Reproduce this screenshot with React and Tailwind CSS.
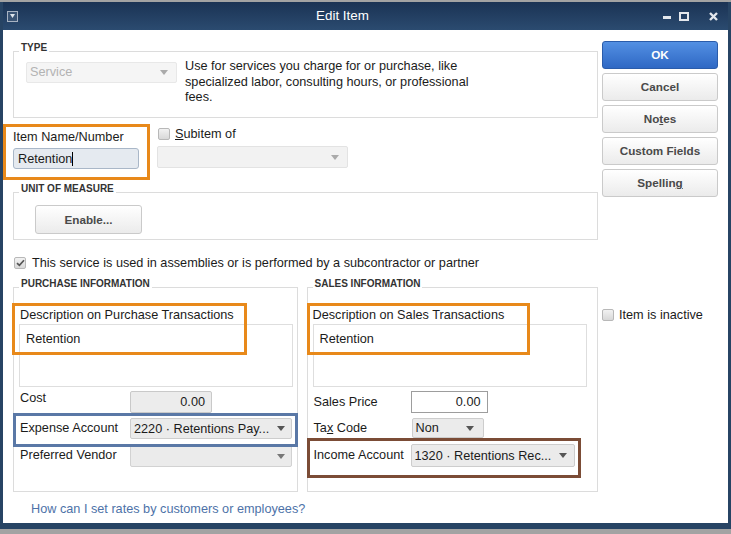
import React from "react";

const Arrow = ({ color = "#555" }) => (
  <svg width="8" height="5" viewBox="0 0 8 5" className="shrink-0">
    <path d="M0 0H8L4 5Z" fill={color} />
  </svg>
);

const Box = ({ checked }) => (
  <span className="w-[12px] h-[12px] shrink-0 rounded-[2px] border border-[#b8b8b8] bg-gradient-to-b from-[#f2f2f2] to-[#d8d8d8] flex items-center justify-center">
    {checked && (
      <svg width="9" height="8" viewBox="0 0 9 8">
        <path d="M1 4.2L3.4 6.4L8 1.2" fill="none" stroke="#555" strokeWidth="1.7" />
      </svg>
    )}
  </span>
);

const Legend = ({ children }) => (
  <span className="absolute left-[5px] top-[-9px] bg-white px-[2px] text-[10px] leading-[10px] font-bold text-[#333]">
    {children}
  </span>
);

const Btn = ({ children, primary }) => (
  <div
    className={
      primary
        ? "h-[28px] w-[116px] rounded-[3px] border border-[#2a5caa] bg-gradient-to-b from-[#5390e3] to-[#2f68c4] text-white font-bold text-[11.7px] flex items-center justify-center"
        : "h-[28px] w-[116px] rounded-[3px] border border-[#cacaca] bg-gradient-to-b from-white to-[#ebebeb] text-[#4a4a4a] font-bold text-[11.7px] flex items-center justify-center"
    }
  >
    {children}
  </div>
);

export default function App() {
  return (
    <div className="w-[731px] h-[534px] bg-[#a3a3a3] pt-[2px] pb-[5px] font-['Liberation_Sans',Arial,sans-serif] text-[12.7px] text-[#1b1b1b]">
      <div className="h-full flex flex-col bg-[#274464] px-[3px] pb-[6px]">
        {/* Title bar */}
        <div className="h-[28px] shrink-0 flex items-center bg-gradient-to-b from-[#1b3354] to-[#2b4b70]">
          <div className="ml-[4px] w-[11px] h-[11px] border border-[#a8b3c2] bg-[#3a5474] flex items-center justify-center">
            <svg width="5" height="4" viewBox="0 0 5 4">
              <path d="M0 0H5L2.5 4Z" fill="#dfe5ec" />
            </svg>
          </div>
          <div className="flex-1 pl-[4px] text-center text-white text-[13.4px]">Edit Item</div>
          <div className="flex items-center mr-[10px]">
            <div className="w-[8px] h-[3px] bg-[#e3e7ec] mt-[2px]" />
            <div className="ml-[8px] w-[10px] h-[9px] border-2 border-[#e3e7ec]" />
            <svg className="ml-[20px]" width="9" height="9" viewBox="0 0 9 9">
              <path d="M1 1L8 8M8 1L1 8" stroke="#e3e7ec" strokeWidth="2.4" />
            </svg>
          </div>
        </div>

        {/* Content */}
        <div className="relative flex-1 bg-white flex">
          {/* Left column */}
          <div className="ml-[10px] w-[585px] flex flex-col">
            {/* TYPE */}
            <div className="relative mt-[21px] h-[67px] border border-[#dcdcdc] flex items-start pl-[12px] pt-[10px]">
              <Legend>TYPE</Legend>
              <div className="w-[151px] h-[21px] rounded-[2px] bg-[#f5f5f5] border border-[#e8e8e8] flex items-center justify-between pl-[3px] pr-[8px] text-[#b3b3b3]">
                <span>Service</span>
                <Arrow color="#aaa" />
              </div>
              <div className="ml-[8px] mt-[-3px] leading-[15.5px] text-[#1b1b1b]">
                Use for services you charge for or purchase, like
                <br />
                specialized labor, consulting hours, or professional
                <br />
                fees.
              </div>
            </div>

            {/* Item name row */}
            <div className="flex mt-[9px]">
              <div className="w-[126px] pt-[3px]">
                <div className="leading-[14px]">Item Name/Number</div>
                <div className="mt-[4px] h-[21px] w-[126px] rounded-[3px] bg-[#e5eaf0] border border-[#a9b7c8] px-[4px] flex items-center leading-[14px]">
                  Retention
                  <span className="inline-block w-[1px] h-[14px] bg-black" />
                </div>
              </div>
              <div className="ml-[18px]">
                <div className="flex items-center h-[13px] ml-[1px] leading-[14px]">
                  <Box />
                  <span className="ml-[5px]">
                    <span className="underline">S</span>ubitem of
                  </span>
                </div>
                <div className="mt-[6px] w-[191px] h-[22px] rounded-[2px] bg-[#f2f2f2] border border-[#e3e3e3] flex items-center justify-end pr-[8px]">
                  <Arrow color="#aaa" />
                </div>
              </div>
            </div>

            {/* UNIT OF MEASURE */}
            <div className="relative mt-[23px] h-[48px] border border-[#dcdcdc] pl-[21px] pt-[12px]">
              <Legend>UNIT OF MEASURE</Legend>
              <div className="w-[107px] h-[29px] rounded-[3px] border border-[#cacaca] bg-gradient-to-b from-white to-[#ebebeb] text-[#4a4a4a] font-bold text-[11.7px] flex items-center justify-center">
                Enable...
              </div>
            </div>

            {/* assemblies checkbox */}
            <div className="mt-[16px] flex items-center h-[13px] ml-[1px] leading-[14px]">
              <Box checked />
              <span className="ml-[6px]">
                This service is used in assemblies or is performed by a subcontractor or partner
              </span>
            </div>

            {/* Purchase / Sales */}
            <div className="mt-[18px] h-[205px] flex gap-[9px]">
              {/* Purchase */}
              <div className="relative w-[285px] h-full border border-[#dcdcdc] pl-[5px] pt-[20px] leading-[14px]">
                <Legend>PURCHASE INFORMATION</Legend>
                <div className="ml-[1px]">Description on Purchase Transactions</div>
                <div className="mt-[2px] w-[274px] h-[63px] border border-[#dedede] pl-[6px] pt-[7px]">Retention</div>
                <div className="mt-[4px] flex items-start">
                  <div className="ml-[1px] w-[110px]">Cost</div>
                  <div className="w-[82px] h-[22px] rounded-[2px] bg-[#ececec] border border-[#c9c9c9] flex items-center justify-end pr-[6px]">
                    0.00
                  </div>
                </div>
                <div className="mt-[5px] flex items-start">
                  <div className="ml-[1px] w-[110px] pt-[3px]">Expense Account</div>
                  <div className="w-[162px] h-[21px] rounded-[2px] bg-[#ebebeb] border border-[#cdcdcd] flex items-center justify-between pl-[3px] pr-[6px]">
                    <span>2220 · Retentions Pay...</span>
                    <Arrow />
                  </div>
                </div>
                <div className="mt-[6px] flex items-start">
                  <div className="ml-[1px] w-[110px] pt-[3px]">Preferred Vendor</div>
                  <div className="w-[162px] h-[22px] rounded-[2px] bg-[#ebebeb] border border-[#d2d2d2] flex items-center justify-end pr-[6px]">
                    <Arrow color="#777" />
                  </div>
                </div>
              </div>

              {/* Sales */}
              <div className="relative w-[292px] h-full border border-[#dcdcdc] pl-[5px] pt-[20px] leading-[14px]">
                <Legend>SALES INFORMATION</Legend>
                <div>Description on Sales Transactions</div>
                <div className="mt-[2px] w-[274px] h-[63px] border border-[#dedede] pl-[6px] pt-[7px]">Retention</div>
                <div className="mt-[4px] flex items-start">
                  <div className="ml-[1px] w-[97px] pt-[4px]">Sales Price</div>
                  <div className="w-[77px] h-[22px] bg-white border border-[#9d9d9d] flex items-center justify-end pr-[6px]">
                    0.00
                  </div>
                </div>
                <div className="mt-[5px] flex items-start">
                  <div className="ml-[1px] w-[98px] pt-[3px]">
                    Ta<span className="underline">x</span> Code
                  </div>
                  <div className="w-[72px] h-[20px] rounded-[2px] bg-[#ebebeb] border border-[#cdcdcd] flex items-center justify-between pl-[3px] pr-[9px]">
                    <span>Non</span>
                    <Arrow />
                  </div>
                </div>
                <div className="mt-[6px] flex items-start">
                  <div className="ml-[1px] w-[97px] pt-[4px]">Income Account</div>
                  <div className="w-[164px] h-[23px] rounded-[2px] bg-[#ebebeb] border border-[#cdcdcd] flex items-center justify-between pl-[3px] pr-[7px]">
                    <span>1320 · Retentions Rec...</span>
                    <Arrow />
                  </div>
                </div>
              </div>
            </div>

            {/* link */}
            <div className="mt-[10px] ml-[18px] leading-[14px] text-[#4d72a8]">
              How can I set rates by customers or employees?
            </div>
          </div>

          {/* Right column */}
          <div className="ml-[4px] w-[116px] pt-[11px] flex flex-col">
            <div className="flex flex-col gap-[4px]">
              <Btn primary>OK</Btn>
              <Btn>Cancel</Btn>
              <Btn>
                No<span className="underline">t</span>es
              </Btn>
              <Btn>Custom Fields</Btn>
              <Btn>
                Spellin<span className="underline">g</span>
              </Btn>
            </div>
            <div className="mt-[112px] flex items-center h-[12px] leading-[14px]">
              <Box />
              <span className="ml-[5px]">Item is inactive</span>
            </div>
          </div>

          {/* Annotation highlights */}
          <div className="absolute left-[0px] top-[94px] w-[147px] h-[56px] border-[3px] border-[#e8891a]" />
          <div className="absolute left-[9px] top-[273px] w-[235px] h-[52px] border-[3px] border-[#e8891a]" />
          <div className="absolute left-[10px] top-[383px] w-[285px] h-[34px] border-[3px] border-[#5a78a6]" />
          <div className="absolute left-[304px] top-[273px] w-[223px] h-[52px] border-[3px] border-[#e8891a]" />
          <div className="absolute left-[304px] top-[408px] w-[274px] h-[40px] border-[3px] border-[#7b4c36]" />
        </div>
      </div>
    </div>
  );
}
